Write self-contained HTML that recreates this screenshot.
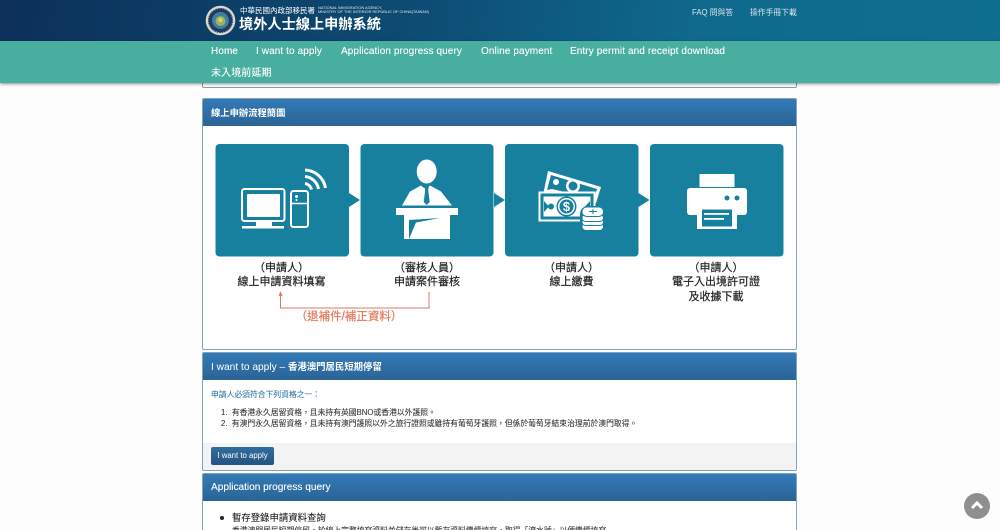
<!DOCTYPE html>
<html lang="zh-Hant"><head><meta charset="utf-8"><title>境外人士線上申辦系統</title>
<style>
*{box-sizing:border-box}
html,body{margin:0;padding:0;width:1000px;height:530px;overflow:hidden;background:#fdfdfd}
body{position:relative;font-family:"Liberation Sans","Noto Sans CJK TC",sans-serif;color:#333}
.a{position:absolute;white-space:nowrap}
.hd{left:0;top:0;width:1000px;height:41px;background:linear-gradient(100deg,#0c3059 0%,#0d4a72 40%,#0f6a8d 70%,#0f6f90 100%)}
.nav{left:0;top:41px;width:1000px;height:42px;background:#48ae9f;box-shadow:0 1px 3px rgba(0,0,0,.45)}
.n{color:#fff;font-size:10px;letter-spacing:.1px;line-height:12px;-webkit-text-stroke:.1px #fff}
.panel{position:absolute;left:202px;width:595px;border:1px solid #7fa3bb;border-radius:2px;background:#fff;overflow:hidden}
.ph{position:absolute;left:0;top:0;width:593px;height:27px;background:linear-gradient(#337ab7,#2b6496);color:#fff;font-size:10px;line-height:28px;padding-left:8px}
.t{position:absolute;font-size:11px;line-height:15px;text-align:center;color:#222;white-space:nowrap;transform:translateX(-50%);-webkit-text-stroke:.2px #222}
.b{font-size:7.8px;line-height:11px;color:#333;white-space:nowrap;position:absolute;-webkit-text-stroke:.08px #333}
</style></head><body>
<div class="a hd"></div>
<svg class="a" style="left:205px;top:5px" width="31" height="31" viewBox="0 0 31 31"><circle cx="15.500" cy="15.500" r="14.800" fill="#d9d8c8"/><circle cx="15.500" cy="15.500" r="12.500" fill="#1d3a63"/><circle cx="15.500" cy="15.500" r="12" fill="none" stroke="#c9ccc8" stroke-width=".6" stroke-dasharray="1 1.500"/><circle cx="15.500" cy="15.500" r="8.500" fill="#3f7ea0"/><circle cx="15.500" cy="16" r="5" fill="#9fb25a"/><circle cx="15.500" cy="15" r="2" fill="#dcd27a"/></svg>
<div class="a" style="left:240px;top:6px;font-size:7.500px;line-height:10px;color:#fff">中華民國內政部移民署</div>
<div class="a" style="left:318px;top:5.500px;font-size:3.900px;line-height:4.500px;color:#dfe8ee">NATIONAL IMMIGRATION AGENCY,<br>MINISTRY OF THE INTERIOR REPUBLIC OF CHINA(TAIWAN)</div>
<div class="a" style="left:239px;top:16px;font-size:14.200px;line-height:19px;font-weight:bold;color:#fff">境外人士線上申辦系統</div>
<div class="a" style="left:692px;top:7px;font-size:7.800px;line-height:12px;color:#d6e4ec">FAQ 問與答</div>
<div class="a" style="left:750px;top:7px;font-size:7.800px;line-height:12px;color:#d6e4ec">操作手冊下載</div>

<div class="a" style="left:202px;top:70px;width:595px;height:18px;border:1px solid #8a9aa8;border-radius:2px;background:#fff"></div>

<div class="a nav"></div>
<div class="a n" style="left:211px;top:46px">Home</div>
<div class="a n" style="left:256px;top:46px">I want to apply</div>
<div class="a n" style="left:341px;top:46px">Application progress query</div>
<div class="a n" style="left:481px;top:46px">Online payment</div>
<div class="a n" style="left:570px;top:46px">Entry permit and receipt download</div>
<div class="a n" style="left:211px;top:67.500px">未入境前延期</div>

<div class="panel" style="top:98px;height:252px">
<div class="ph" style="font-weight:bold;font-size:9.300px">線上申辦流程簡圖</div>
</div>
<svg class="a" style="left:203px;top:126px" width="593" height="200" viewBox="203 126 593 200">
<g fill="#17809f">
<rect x="215.500" y="144" width="133.500" height="112.500" rx="4"/>
<rect x="360.500" y="144" width="133" height="112.500" rx="4"/>
<rect x="505" y="144" width="133.500" height="112.500" rx="4"/>
<rect x="650" y="144" width="133.500" height="112.500" rx="4"/>
<path d="M349 193l11 7-11 7zM494 193l11 7-11 7zM638.500 193l11 7-11 7z"/>
</g>
<g fill="none" stroke="#fff" stroke-width="2">
<rect x="242" y="189" width="42.500" height="32" rx="2.500"/>
<rect x="291" y="191" width="17" height="36" rx="2.500"/>
<path d="M305 183.500a8 8 0 0 1 6.500 6" stroke-width="3"/>
<path d="M305 176.500a15 15 0 0 1 13.500 12.500" stroke-width="3"/>
<path d="M305 170a21.500 21.500 0 0 1 20.500 18" stroke-width="3"/>
<path d="M291 203.500h17" stroke-width="1.500"/>
</g>
<g fill="#fff">
<rect x="247" y="194" width="33" height="23" rx="1"/>
<rect x="256" y="221" width="16" height="5"/>
<rect x="242" y="226" width="42" height="2.500"/>
<circle cx="296.500" cy="196.500" r="1.500"/><circle cx="296.500" cy="200" r="1"/>
</g>
<g fill="#fff">
<ellipse cx="426.700" cy="171.500" rx="10" ry="12"/>
<path d="M402 205.500l8-14 11-6 3 2.500 3.500 0 2.500-2.500 11 6 11 14z"/>
<rect x="396" y="208" width="62" height="7"/>
<path d="M404 215h46v24h-46z"/>
</g>
<path d="M424.700 187h4l-.500 3 1.500 12-3 3-3-3 1.500-12z" fill="#17809f"/>
<path d="M409 220L440 218 416 222.500 409 239Z" fill="#17809f"/>
<g>
<path d="M548 171L601 187 596 203 590 203 590 195 543 195Z" fill="#fff"/>
<path d="M551 175L597 189 594 199 552 189 547 190Z" fill="#17809f"/>
<circle cx="573" cy="186" r="7" fill="#fff"/>
<circle cx="573" cy="186" r="4.500" fill="#17809f"/>
<circle cx="556" cy="182" r="3" fill="#fff"/>
<rect x="539" y="192" width="56" height="29" fill="#17809f"/>
<rect x="539.500" y="192.500" width="55" height="28" fill="none" stroke="#fff" stroke-width="2"/>
<rect x="543.500" y="196.500" width="47" height="20" fill="#fff"/>
<circle cx="566.500" cy="206.500" r="10" fill="#17809f"/>
<circle cx="566.500" cy="206.500" r="8.500" fill="#fff"/>
<circle cx="566.500" cy="206.500" r="7" fill="#17809f"/>
<circle cx="551" cy="206.500" r="3" fill="#17809f"/>
<path d="M544 201l5 5.500-5 5.500zM590 201l-5 5.500 5 5.500z" fill="#17809f"/>
<text x="566.500" y="211" fill="#fff" font-size="13" font-weight="bold" text-anchor="middle" font-family="Liberation Sans">$</text>
<rect x="580" y="206" width="26" height="26" rx="8" fill="#17809f"/>
<g fill="#fff" stroke="#17809f" stroke-width=".9">
<rect x="582" y="222.500" width="21.500" height="8" rx="4"/>
<rect x="582" y="218.500" width="21.500" height="7" rx="3.500"/>
<rect x="582" y="214.500" width="21.500" height="7" rx="3.500"/>
<rect x="582" y="207" width="21.500" height="9.500" rx="4.700"/>
</g>
<path d="M589 211.500h8M593 209v5" stroke="#17809f" fill="none"/>
</g>
<g fill="#fff">
<rect x="699.500" y="174" width="35" height="13"/>
<rect x="687" y="188" width="60" height="27" rx="3"/>
<circle cx="727" cy="198" r="2.500" fill="#17809f"/><circle cx="737" cy="198" r="2.500" fill="#17809f"/>
<rect x="697" y="207" width="40" height="22"/>
<rect x="702" y="209.500" width="30" height="17" fill="#17809f"/>
<rect x="704" y="213" width="25" height="1.800"/><rect x="704" y="218" width="20" height="1.800"/>
</g>
<path d="M429 292v16H280.500V296" fill="none" stroke="#e2785c" stroke-width="1"/>
<path d="M280.500 291l-2 5h4z" fill="#e2785c"/>
</svg>
<div class="t" style="left:281.500px;top:260.500px">（申請人）</div>
<div class="t" style="left:281.500px;top:275px">線上申請資料填寫</div>
<div class="t" style="left:427px;top:260.500px">（審核人員）</div>
<div class="t" style="left:427px;top:275px">申請案件審核</div>
<div class="t" style="left:571.500px;top:260.500px">（申請人）</div>
<div class="t" style="left:571.500px;top:275px">線上繳費</div>
<div class="t" style="left:716px;top:260.500px">（申請人）</div>
<div class="t" style="left:716px;top:275px">電子入出境許可證</div>
<div class="t" style="left:716px;top:290px">及收據下載</div>
<div class="t" style="left:349px;top:309.500px;color:#e2785c;font-size:11.500px;-webkit-text-stroke:.2px #e2785c">（退補件/補正資料）</div>

<div class="panel" style="top:352px;height:119px">
<div class="ph" style="font-size:10.200px;padding-left:8px">I want to apply – <b style="font-size:9.400px">香港澳門居民短期停留</b></div>
<div style="position:absolute;left:0;top:90px;width:593px;height:28px;background:#f3f3f3"></div>
</div>
<div class="b" style="left:211px;top:389px;color:#2f7aa8;-webkit-text-stroke:.08px #2f7aa8">申請人必須符合下列資格之一：</div>
<div class="b" style="left:221px;top:407px">1.&nbsp; 有香港永久居留資格，且未持有英國BNO或香港以外護照。</div>
<div class="b" style="left:221px;top:418px">2.&nbsp; 有澳門永久居留資格，且未持有澳門護照以外之旅行證照或雖持有葡萄牙護照，但係於葡萄牙結束治理前於澳門取得。</div>
<div class="a" style="left:211px;top:447px;width:63px;height:18px;border-radius:2px;background:linear-gradient(#2f6f9f,#24537f);color:#fff;font-size:7.800px;line-height:18px;text-align:center">I want to apply</div>

<div class="panel" style="top:473px;height:70px">
<div class="ph" style="font-size:10.100px;-webkit-text-stroke:.1px #fff">Application progress query</div>
</div>
<div class="a" style="left:220px;top:511px;width:4px;height:4px;margin-top:5px;border-radius:50%;background:#222"></div>
<div class="a" style="left:232px;top:511px;font-size:9.400px;line-height:14px;color:#222;-webkit-text-stroke:.1px #222">暫存登錄申請資料查詢</div>
<div class="b" style="left:232px;top:525px">香港澳門居民短期停留，於線上完整填寫資料並儲存後可以暫存資料繼續填寫，取得「流水號」以便繼續填寫</div>

<div class="a" style="left:964px;top:493px;width:26px;height:26px;border-radius:50%;background:#8f8f8f"></div>
<svg class="a" style="left:964px;top:493px" width="26" height="26" viewBox="0 0 26 26"><path d="M8 15l5-5 5 5" fill="none" stroke="#fff" stroke-width="3"/></svg>
</body></html>
